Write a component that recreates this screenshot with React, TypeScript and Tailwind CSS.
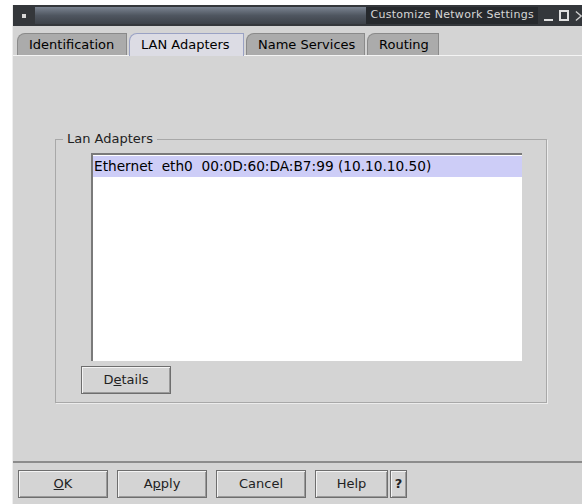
import { ReactNode } from 'react';

const font = { fontFamily: '"DejaVu Sans", "Liberation Sans", sans-serif' };

const tabs = [
  { label: 'Identification', width: 'w-[110px]', active: false },
  { label: 'LAN Adapters', width: 'w-[115px]', active: true },
  { label: 'Name Services', width: 'w-[119px]', active: false },
  { label: 'Routing', width: 'w-[72px]', active: false },
];

const Tab = ({ label, width, active }: { label: string; width: string; active: boolean }) => (
  <div
    className={`relative h-[22px] ${width} flex items-center pl-[11px] text-[13px] text-black rounded-tl-[8px] border-t border-r border-l ${
      active
        ? 'bg-[#dcdce4] border-[#9aa2c4] h-[23px] -mb-px z-10'
        : 'bg-[#ababab] border-[#8a8a8a]'
    }`}
  >
    {label}
  </div>
);

const Button = ({ children, width }: { children: ReactNode; width: string }) => (
  <div
    className={`${width} h-[28px] flex items-center justify-center text-[13px] text-[#222] bg-[#d4d4d4] border border-[#6e6e6e] shadow-[inset_1px_1px_0_#f4f4f4,inset_-1px_-1px_0_#9a9a9a]`}
  >
    {children}
  </div>
);

export default function App() {
  return (
    <div className="w-[582px] h-[504px] bg-white pl-[12px] pt-[5px] overflow-hidden" style={font}>
      <div className="h-full flex flex-col bg-[#d4d4d4] border-l border-[#eeeeee]">
        {/* title bar */}
        <div className="h-[21px] flex items-stretch bg-[#34373b]">
          <div className="w-[22px] flex items-center justify-center">
            <div className="w-[4px] h-[4px] bg-[#d8d8d8]" />
          </div>
          <div className="flex-1 my-[2px] bg-gradient-to-b from-[#7b8491] via-[#4f5660] to-[#3d4249] flex items-center justify-end">
            <div className="h-full flex items-center px-[4px] bg-[#26292d] text-[11px] text-[#d6d6d6] tracking-[0.3px]">
              Customize Network Settings
            </div>
          </div>
          <div className="w-[44px] flex items-center gap-[6px] pl-[6px] text-[#e0e0e0]">
            <div className="w-[10px] h-[2px] bg-[#e0e0e0] mt-[8px]" />
            <div className="w-[11px] h-[11px] border-2 border-[#e0e0e0]" />
            <svg width="8" height="12" viewBox="0 0 8 12">
              <path d="M1 1 L7 6 L1 11" stroke="#cfcfcf" strokeWidth="1.5" fill="none" />
            </svg>
          </div>
        </div>

        {/* tabs */}
        <div className="flex items-end gap-[2px] pl-[4px] mt-[7px]">
          {tabs.map((t) => (
            <Tab key={t.label} {...t} />
          ))}
        </div>

        {/* tab page */}
        <div className="h-[406px] border-t border-[#f4f4f4] pt-[83px] pl-[42px] pr-[35px]">
          <div className="relative h-[264px] border border-[#a8a8a8] shadow-[1px_1px_0_#ececec] pt-[13px] pl-[35px] pr-[24px]">
            <div className="absolute -top-[10px] left-[7px] bg-[#d4d4d4] px-[4px] text-[13px] text-[#222] leading-[18px]">
              Lan Adapters
            </div>
            <div className="h-[208px] bg-white border-t-2 border-l-2 border-[#7a7a7a] pt-[1px]">
              <div className="h-[21px] bg-[#cdcdf7] flex items-center pl-[1px] text-[13.7px] text-black whitespace-pre">
                {'Ethernet  eth0  00:0D:60:DA:B7:99 (10.10.10.50)'}
              </div>
            </div>
            <div className="mt-[5px] -ml-[10px]">
              <Button width="w-[90px]">
                <span>
                  D<span className="underline">e</span>tails
                </span>
              </Button>
            </div>
          </div>
        </div>

        {/* button row */}
        <div className="border-t-2 border-[#8c8c8c] flex gap-[9px] pl-[5px] pt-[7px]">
          <Button width="w-[90px]">
            <span>
              <span className="underline">O</span>K
            </span>
          </Button>
          <Button width="w-[90px]">
            <span>
              A<span className="underline">p</span>ply
            </span>
          </Button>
          <Button width="w-[90px]">Cancel</Button>
          <div className="flex gap-[2px]">
            <Button width="w-[73px]">Help</Button>
            <Button width="w-[17px]">
              <span className="font-bold">?</span>
            </Button>
          </div>
        </div>
      </div>
    </div>
  );
}
